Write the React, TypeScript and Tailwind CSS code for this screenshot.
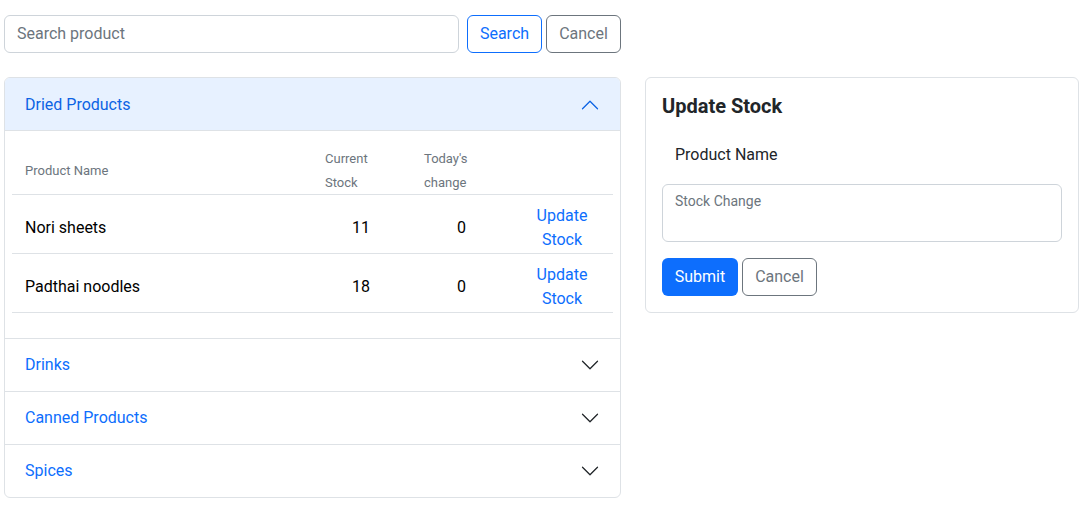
import React from "react";

const Chevron = ({ up, color }: { up?: boolean; color: string }) => (
  <svg width="20" height="20" viewBox="0 0 16 16" fill="none" className="shrink-0">
    <path
      d={up ? "M2 11L8 5L14 11" : "M2 5L8 11L14 5"}
      stroke={color}
      strokeWidth="1"
      strokeLinecap="round"
      strokeLinejoin="round"
    />
  </svg>
);

const rows = [
  { name: "Nori sheets", stock: 11, change: 0 },
  { name: "Padthai noodles", stock: 18, change: 0 },
];

export default function App() {
  return (
    <div
      className="w-[1088px] h-[510px] bg-white text-[#212529] text-[16px] leading-[24px]"
      style={{ fontFamily: "Roboto, 'Noto Sans', sans-serif" }}
    >
      <div className="pl-[4px] pt-[15px] flex">
        <div className="w-[455px] h-[38px] border border-[#ced4da] rounded-[6px] flex items-center px-[12px] text-[#6c757d]">
          Search product
        </div>
        <div className="ml-[8px] w-[75px] h-[38px] border border-[#0d6efd] rounded-[6px] flex items-center justify-center text-[#0d6efd]">
          Search
        </div>
        <div className="ml-[4px] w-[75px] h-[38px] border border-[#6c757d] rounded-[6px] flex items-center justify-center text-[#6c757d]">
          Cancel
        </div>
      </div>

      <div className="flex pl-[4px] mt-[24px] gap-[24px] items-start">
        {/* Accordion */}
        <div className="w-[617px] border border-[#dee2e6] rounded-[6px] overflow-hidden">
          <div className="h-[53px] pt-[1px] bg-[#e7f1ff] flex items-center justify-between px-[20px] text-[#0c63e4] border-b border-[#dee2e6]">
            <span>Dried Products</span>
            <Chevron up color="#0c63e4" />
          </div>
          <div className="pt-[16px] pb-[25px] px-[7px]">
            <div className="flex items-center h-[48px] border-b border-[#dee2e6] text-[13px] leading-[24px] text-[#6c757d]">
              <div className="w-[301px] pl-[13px]">Product Name</div>
              <div className="w-[99px] pl-[12px]">
                Current
                <br />
                Stock
              </div>
              <div className="w-[100px] pl-[12px]">
                Today's
                <br />
                change
              </div>
              <div className="w-[100px]"></div>
            </div>
            {rows.map((r) => (
              <div key={r.name} className="flex items-start pt-[9px] h-[59px] border-b border-[#dee2e6] text-black">
                <div className="w-[301px] pl-[13px] h-[48px] flex items-center">{r.name}</div>
                <div className="w-[99px] h-[48px] flex items-center justify-end pr-[42px]">{r.stock}</div>
                <div className="w-[100px] h-[48px] flex items-center justify-end pr-[46px]">{r.change}</div>
                <div className="w-[100px] text-center text-[#0d6efd]">
                  Update
                  <br />
                  Stock
                </div>
              </div>
            ))}
          </div>
          {["Drinks", "Canned Products", "Spices"].map((t) => (
            <div
              key={t}
              className="h-[53px] border-t border-[#dee2e6] flex items-center justify-between px-[20px] text-[#0d6efd]"
            >
              <span>{t}</span>
              <Chevron color="#212529" />
            </div>
          ))}
        </div>

        {/* Update card */}
        <div className="w-[434px] border border-[#dee2e6] rounded-[6px] p-[16px] pb-[16px]">
          <div className="text-[20px] leading-[24px] font-bold">Update Stock</div>
          <div className="mt-[18px] h-[38px] flex items-center px-[13px]">Product Name</div>
          <div className="mt-[10px] h-[58px] border border-[#ced4da] rounded-[6px] px-[12px] pt-[4px] text-[14px] text-[#6c757d]">
            Stock Change
          </div>
          <div className="mt-[16px] flex gap-[4px]">
            <div className="w-[76px] h-[38px] rounded-[6px] bg-[#0d6efd] text-white flex items-center justify-center">
              Submit
            </div>
            <div className="w-[75px] h-[38px] border border-[#6c757d] rounded-[6px] flex items-center justify-center text-[#6c757d]">
              Cancel
            </div>
          </div>
        </div>
      </div>
    </div>
  );
}
